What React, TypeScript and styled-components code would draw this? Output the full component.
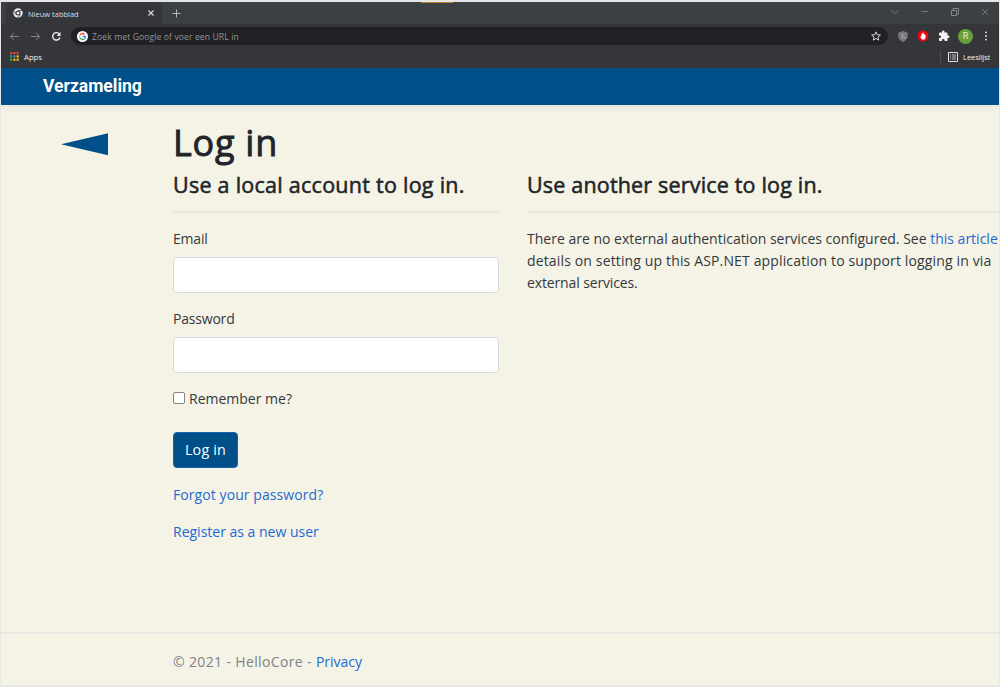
import React from "react";
import styled, { createGlobalStyle } from "styled-components";

const Global = createGlobalStyle`
  * { box-sizing: border-box; }
  html, body { margin: 0; padding: 0; overflow: hidden; }
  body { font-family: "Open Sans", "Noto Sans", sans-serif; color: #212529; }
`;

const Frame = styled.div`
  width: 1000px;
  height: 687px;
  border: 1px solid #e6e6e6;
  border-width: 2px 1px 2px 1px;
  background: #f5f3e6;
  display: flex;
  flex-direction: column;
  overflow: hidden;
`;

const TabStrip = styled.div`
  position: relative;
  height: 22px;
  background: #3c4043;
  display: flex;
  align-items: stretch;
  padding-left: 5px;
`;
const Accent = styled.span`
  position: absolute;
  left: 420px;
  top: 0;
  width: 32px;
  height: 1px;
  background: #b5842c;
`;
const Tab = styled.div`
  width: 156px;
  background: #35363a;
  border-radius: 5px 5px 0 0;
  display: flex;
  align-items: center;
  padding: 0 7px 0 7px;
`;
const TabTitle = styled.span`
  flex: 1;
  margin-left: 5px;
  padding-top: 1px;
  font-size: 7.4px;
  line-height: 12px;
  letter-spacing: 0.05px;
  color: #dcdee1;
`;
const NewTab = styled.div`
  display: flex;
  align-items: center;
  margin-left: 10px;
`;
const WindowButtons = styled.div`
  margin-left: auto;
  display: flex;
  align-items: center;
  gap: 20px;
  padding: 0 9px 2px 0;
`;
const Toolbar = styled.div`
  height: 24px;
  background: #35363a;
  display: flex;
  align-items: center;
  padding: 0 9px 0 8px;
`;
const NavIcons = styled.div`
  display: flex;
  gap: 10px;
  width: 62px;
`;
const Omnibox = styled.div`
  width: 817px;
  height: 18px;
  border-radius: 9px;
  background: #202124;
  display: flex;
  align-items: center;
  padding: 0 7px 0 6px;
`;
const Hint = styled.span`
  flex: 1;
  margin-left: 4px;
  padding-top: 1px;
  font-size: 8.6px;
  line-height: 14px;
  letter-spacing: 0.1px;
  color: #92959a;
`;
const Extensions = styled.div`
  margin-left: auto;
  display: flex;
  align-items: center;
`;
const Avatar = styled.span`
  width: 15px;
  height: 15px;
  margin: 0 9px 0 8px;
  border-radius: 50%;
  background: #689f38;
  color: #e6f0dc;
  font: 9px/15px Roboto, sans-serif;
  text-align: center;
`;
const Bookmarks = styled.div`
  height: 20px;
  background: #35363a;
  display: flex;
  align-items: center;
  padding: 0 9px 3px 9px;
`;
const BookmarkLabel = styled.span<{ $tight?: boolean }>`
  font-size: 7.8px;
  line-height: 12px;
  letter-spacing: ${(p) => (p.$tight ? "-0.22px" : "-0.05px")};
  color: #eceef0;
  margin-left: 5px;
`;
const ReadingList = styled.div`
  margin-left: auto;
  display: flex;
  align-items: center;
  border-left: 1px solid #505256;
  padding-left: 7px;
`;

const Navbar = styled.header`
  height: 37px;
  flex: none;
  background: #004f88;
  box-shadow: 0 3px 8px rgba(0, 0, 0, 0.06);
  padding-left: 42px;
  font: 700 17.5px/36px Roboto, sans-serif;
  color: #fff;
`;
const Content = styled.main`
  flex: 1;
  display: flex;
  padding-top: 16px;
`;
const BackColumn = styled.div`
  width: 172px;
  flex: none;
  padding: 12px 0 0 60px;
  svg { display: block; }
`;
const Page = styled.div`
  flex: 1;
  min-width: 0;
`;
const Title = styled.h1`
  margin: 0 0 8px;
  font-size: 36px;
  font-weight: 400;
  line-height: 43px;
  letter-spacing: 0.75px;
  -webkit-text-stroke: 0.9px currentColor;
`;
const Columns = styled.div`
  display: flex;
  gap: 28px;
`;
const LocalAccount = styled.section`
  width: 326px;
  flex: none;
`;
const OtherService = styled.section`
  flex: 1;
  min-width: 0;
`;
const Heading = styled.h2<{ $spacing: number }>`
  margin: 0;
  height: 41px;
  border-bottom: 2px solid #e9e7da;
  font-size: 21.5px;
  font-weight: 400;
  line-height: 26px;
  letter-spacing: ${(p) => p.$spacing}px;
  white-space: nowrap;
  -webkit-text-stroke: 0.55px currentColor;
`;
const Field = styled.label`
  display: block;
  margin-top: 15px;
  font-size: 14px;
  line-height: 22px;
  letter-spacing: -0.2px;
  color: #33383d;
`;
const Input = styled.input`
  display: block;
  width: 326px;
  height: 36px;
  margin-top: 7px;
  border: 1px solid #d5dadd;
  border-radius: 4px;
  background: #fff;
  outline: none;
`;
const Remember = styled.label`
  display: flex;
  align-items: center;
  gap: 4px;
  margin-top: 15px;
  font-size: 14px;
  line-height: 22px;
  color: #33383d;
`;
const Checkbox = styled.input`
  appearance: none;
  width: 12px;
  height: 12px;
  margin: 0 0 2px;
  border: 1px solid #858585;
  border-radius: 2px;
  background: #fff;
`;
const Submit = styled.button`
  display: block;
  width: 65px;
  height: 36px;
  margin: 22px 0 16px;
  padding: 0;
  border: 1px solid #1861ac;
  border-radius: 4px;
  background: #004f88;
  color: #fff;
  font: 14.3px/34px "Open Sans", sans-serif;
  letter-spacing: 0.2px;
`;
const Link = styled.a`
  color: #1f6ad2;
  text-decoration: none;
`;
const LinkRow = styled.p<{ $spacing: number }>`
  margin: 0 0 15px;
  font-size: 14px;
  line-height: 22px;
  letter-spacing: ${(p) => p.$spacing}px;
`;
const Line = styled.span<{ $spacing: number }>`
  display: block;
  letter-spacing: ${(p) => p.$spacing}px;
`;
const Info = styled.p`
  margin: 15px 0 0;
  font-size: 14px;
  line-height: 22px;
  color: #33383d;
  white-space: nowrap;
`;
const Footer = styled.footer`
  height: 53px;
  flex: none;
  border-top: 2px solid #e8e8e2;
  padding: 17px 0 0 172px;
  font-size: 14px;
  line-height: 22px;
  letter-spacing: 0.36px;
  color: #7c8287;
  a { letter-spacing: 0; }
`;

const ChromeLogo = () => (
  <svg width="10" height="10" viewBox="0 0 20 20">
    <circle cx="10" cy="10" r="9.5" fill="#e8eaed" />
    <circle cx="10" cy="10" r="5" fill="#35363a" />
    <circle cx="10" cy="10" r="3" fill="#e8eaed" />
    <path d="M10 5.2h8.6M5.8 12.4 1.7 5.2M14.2 12.4 10 19.6" stroke="#35363a" strokeWidth="1.5" />
  </svg>
);
const GoogleLogo = () => (
  <svg width="11" height="11" viewBox="0 0 22 22" fill="none" strokeWidth="2.6">
    <circle cx="11" cy="11" r="11" fill="#fff" />
    <path d="M15.2 6.8A6 6 0 0 0 5.6 8.4" stroke="#ea4335" />
    <path d="M5.6 8.4a6 6 0 0 0 0 5.2" stroke="#fbbc05" />
    <path d="M5.6 13.6a6 6 0 0 0 9.5 1.8" stroke="#34a853" />
    <path d="M15.1 15.4A6 6 0 0 0 17 11h-6" stroke="#4285f4" />
  </svg>
);
const HandIcon = styled.svg`
  margin-left: 9px;
`;
const PuzzleIcon = styled.svg`
  margin-left: 9px;
`;
const appColors = ["#ea4335", "#ea4335", "#ea4335", "#34a853", "#4285f4", "#fbbc05", "#34a853", "#fbbc05", "#fbbc05"];

export default function App() {
  return (
    <Frame>
      <Global />
      <TabStrip>
        <Accent />
        <Tab>
          <ChromeLogo />
          <TabTitle>Nieuw tabblad</TabTitle>
          <svg width="8" height="8" viewBox="0 0 8 8" stroke="#dcdee1" strokeWidth="1.1"><path d="M1.5 1.5l5 5M6.5 1.5l-5 5" /></svg>
        </Tab>
        <NewTab>
          <svg width="9" height="9" viewBox="0 0 9 9" stroke="#b4b7ba" strokeWidth="1"><path d="M4.5 0.5v8M0.5 4.5h8" /></svg>
        </NewTab>
        <WindowButtons>
          <svg width="10" height="10" viewBox="0 0 10 10" fill="none" stroke="#777a7d"><path d="M1.5 3.2 5 6.8l3.5-3.6" /></svg>
          <svg width="10" height="10" viewBox="0 0 10 10" fill="none" stroke="#777a7d"><path d="M1.5 4.5h7" /></svg>
          <svg width="10" height="10" viewBox="0 0 10 10" fill="none" stroke="#85888b"><path d="M1.5 3.5h5v5h-5zM3 3.5v-2h5.5v5.5h-2" /></svg>
          <svg width="10" height="10" viewBox="0 0 10 10" fill="none" stroke="#777a7d"><path d="M2 2l6 6M8 2l-6 6" /></svg>
        </WindowButtons>
      </TabStrip>
      <Toolbar>
        <NavIcons>
          <svg width="11" height="11" viewBox="0 0 11 11" fill="none" stroke="#85888b"><path d="M10 5.5H1.5M5 1.8 1.3 5.5 5 9.2" /></svg>
          <svg width="11" height="11" viewBox="0 0 11 11" fill="none" stroke="#85888b"><path d="M1 5.5h8.5M6 1.8l3.7 3.7L6 9.2" /></svg>
          <svg width="11" height="11" viewBox="0 0 11 11" fill="none" stroke="#eceef0" strokeWidth="1.4"><path d="M8.4 3.2A3.7 3.7 0 1 0 8.900 6.500" /><path d="M9.5 1v3.900H5.600z" fill="#eceef0" stroke="none" /></svg>
        </NavIcons>
        <Omnibox>
          <GoogleLogo />
          <Hint>Zoek met Google of voer een URL in</Hint>
          <svg width="10" height="10" viewBox="0 0 24 24" fill="none" stroke="#dcdee1" strokeWidth="2.3"><path d="m12 2 3 7 7.5.6-5.7 5 1.7 7.4-6.500-4-6.500 4 1.7-7.4-5.7-5 7.5-.6z" /></svg>
        </Omnibox>
        <Extensions>
          <svg width="10" height="11" viewBox="0 0 20 22"><path d="M10 1l8.5 3v6.5c0 5-4 8.5-8.5 10.5C5.5 19 1.5 15.5 1.5 10.5V4z" fill="#6f7174" stroke="#8d8f91" strokeWidth="1.5" /><path d="M14 7C8 4 3.5 8 10 10.5S12 17 6 14M5 6l11 10" fill="none" stroke="#b0b1b2" strokeWidth="1.5" /></svg>
          <HandIcon width="12" height="12" viewBox="0 0 24 24"><path d="M7 1.500h10L22.500 7v10L17 22.500H7L1.500 17V7z" fill="#e50914" /><path d="M9 12V8q1-1 2 0V5.500q1-1 2 0V8q1-1 2 0v2q1-1 2 0v5q0 4.500-4.500 4.500c-3 0-4.500-2-6-6q1-1.500 2.500-.5z" fill="#fff" /></HandIcon>
          <PuzzleIcon width="12" height="12" viewBox="0 0 24 24"><path fill="#f1f3f4" d="M20.500 11H19V7a2 2 0 0 0-2-2h-4V3.500a2.500 2.500 0 0 0-5 0V5H4a2 2 0 0 0-2 2v3.800h1.500a2.700 2.700 0 0 1 0 5.400H2V20a2 2 0 0 0 2 2h3.800v-1.500a2.700 2.700 0 0 1 5.400 0V22H17a2 2 0 0 0 2-2v-4h1.500a2.500 2.500 0 0 0 0-5z" /></PuzzleIcon>
          <Avatar>R</Avatar>
          <svg width="8" height="10" viewBox="0 0 8 10" fill="#eceef0"><circle cx="4" cy="1.4" r=".9" /><circle cx="4" cy="5" r=".9" /><circle cx="4" cy="8.6" r=".9" /></svg>
        </Extensions>
      </Toolbar>
      <Bookmarks>
        <svg width="9" height="9" viewBox="0 0 9 9">
          {appColors.map((c, i) => (
            <rect key={i} x={(i % 3) * 3.3} y={Math.floor(i / 3) * 3.3} width="2.2" height="2.2" fill={c} />
          ))}
        </svg>
        <BookmarkLabel>Apps</BookmarkLabel>
        <ReadingList>
          <svg width="10" height="10" viewBox="0 0 10 10" fill="none" stroke="#dcdee1"><path d="M.5.5h9v9h-9z" /><path d="M2 3h1.2M4 3h4M2 5h1.2M4 5h4M2 7h1.2M4 7h4" strokeWidth=".8" /></svg>
          <BookmarkLabel $tight>Leeslijst</BookmarkLabel>
        </ReadingList>
      </Bookmarks>
      <Navbar>Verzameling</Navbar>
      <Content>
        <BackColumn>
          <svg width="47" height="23" viewBox="0 0 47 23"><path d="M0 11.3 47 .3v22z" fill="#004f88" /></svg>
        </BackColumn>
        <Page>
          <Title>Log in</Title>
          <Columns>
            <LocalAccount>
              <Heading $spacing={0.26}>Use a local account to log in.</Heading>
              <Field>Email<Input type="text" /></Field>
              <Field>Password<Input type="password" /></Field>
              <Remember><Checkbox type="checkbox" />Remember me?</Remember>
              <Submit type="button">Log in</Submit>
              <LinkRow $spacing={0.08}><Link>Forgot your password?</Link></LinkRow>
              <LinkRow $spacing={0}><Link>Register as a new user</Link></LinkRow>
            </LocalAccount>
            <OtherService>
              <Heading $spacing={0.18}>Use another service to log in.</Heading>
              <Info>
                <Line $spacing={0}>There are no external authentication services configured. See <Link>this article</Link></Line>
                <Line $spacing={0.145}>details on setting up this ASP.NET application to support logging in via</Line>
                <Line $spacing={-0.13}>external services.</Line>
              </Info>
            </OtherService>
          </Columns>
        </Page>
      </Content>
      <Footer>© 2021 - HelloCore - <Link>Privacy</Link></Footer>
    </Frame>
  );
}
